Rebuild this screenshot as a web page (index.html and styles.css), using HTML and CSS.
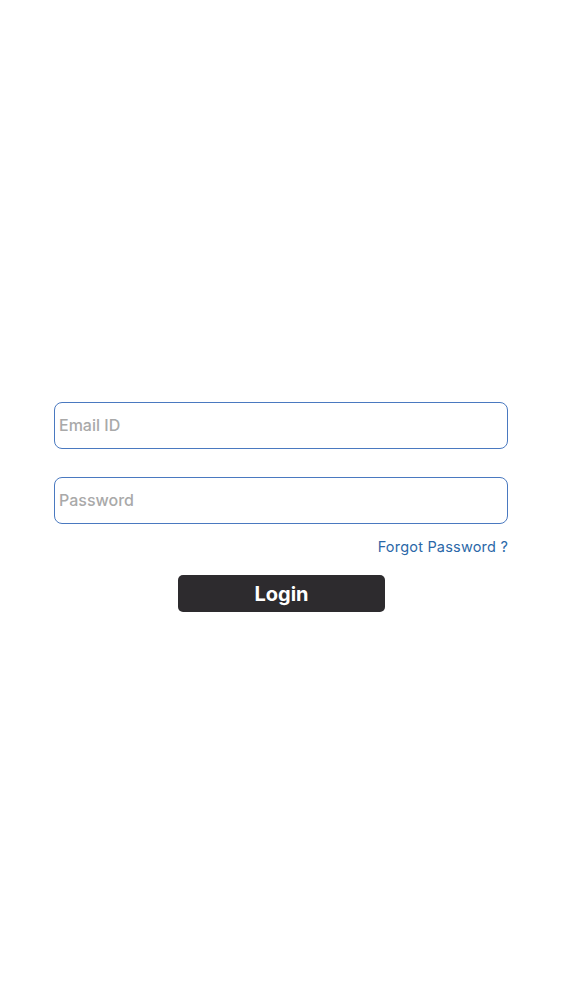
FILE: index.html
```html
<!DOCTYPE html>
<html>
<head>
<meta charset="utf-8">
<link rel="stylesheet" href="styles.css">
</head>
<body>
<main class="login">
  <div class="field"><span class="placeholder">Email ID</span></div>
  <div class="field"><span class="placeholder">Password</span></div>
  <div class="forgot-row"><a class="forgot">Forgot Password ?</a></div>
  <div class="btn-row"><button class="login-btn">Login</button></div>
</main>
</body>
</html>
```

FILE: styles.css
```css
html, body {
  margin: 0;
  padding: 0;
  background: #ffffff;
  font-family: Inter, "Liberation Sans", Arial, sans-serif;
}
.login {
  padding: 402px 55px 0 54px;
  display: flex;
  flex-direction: column;
}
.field {
  box-sizing: border-box;
  height: 47px;
  border: 1.5px solid #4a79c0;
  border-radius: 8px;
  display: flex;
  align-items: center;
  padding-left: 4px;
  margin-bottom: 28px;
}
.field + .field {
  margin-bottom: 0;
}
.placeholder {
  color: #a9a9a9;
  font-size: 16px;
  font-weight: 500;
  margin-top: -2px;
}
.forgot-row {
  display: flex;
  justify-content: flex-end;
  margin-top: 14px;
}
.forgot {
  color: #2b68a8;
  font-size: 14.5px;
  letter-spacing: 0.2px;
}
.btn-row {
  display: flex;
  justify-content: center;
  margin-top: 20px;
  padding-left: 1px;
}
.login-btn {
  width: 207px;
  height: 37px;
  border: none;
  border-radius: 5px;
  background: #2d2b2e;
  color: #ffffff;
  font-family: Inter, "Liberation Sans", Arial, sans-serif;
  font-weight: 700;
  font-size: 20px;
  padding: 0;
}
```
